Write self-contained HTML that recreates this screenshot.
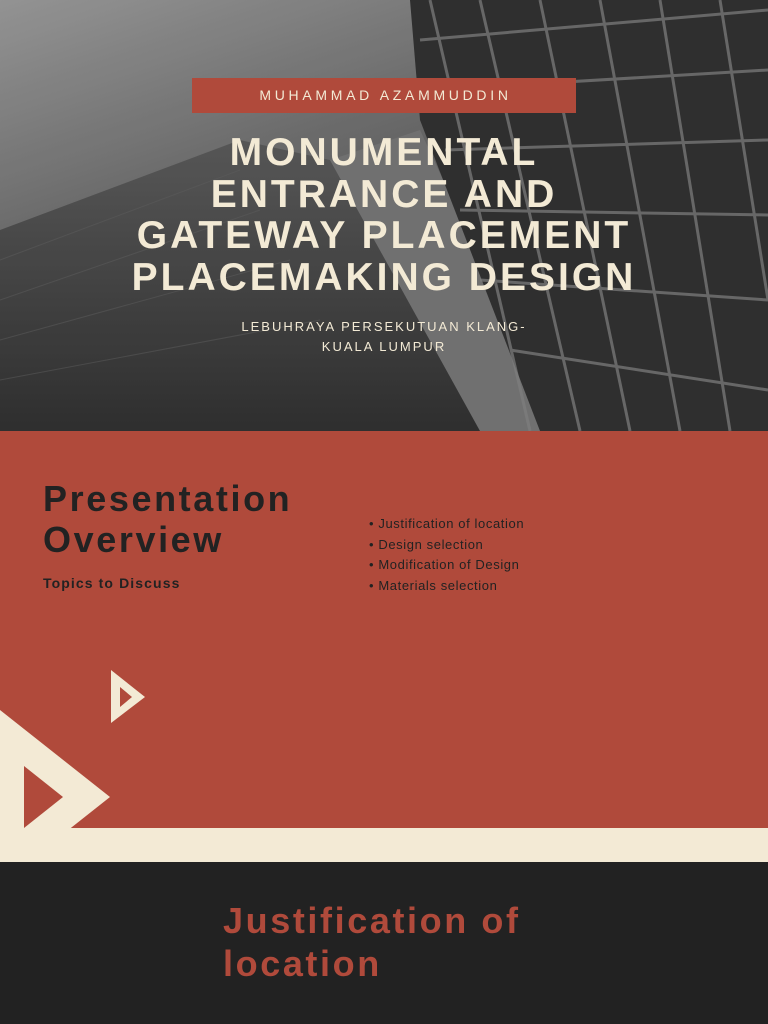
<!DOCTYPE html>
<html><head><meta charset="utf-8"><style>
*{margin:0;padding:0;box-sizing:border-box}
body{width:768px;height:1024px;overflow:hidden;font-family:"Liberation Sans",sans-serif;background:#222}
.a{position:absolute;white-space:nowrap}
</style></head><body>
<div style="position:absolute;left:0;top:0;width:768px;height:431px;overflow:hidden">
<svg width="768" height="431" style="position:absolute;left:0;top:0">
<defs>
<linearGradient id="sky" x1="0" y1="0" x2="0.6" y2="1">
<stop offset="0" stop-color="#a0a0a0"/><stop offset="0.4" stop-color="#757575"/><stop offset="1" stop-color="#3a3a3a"/>
</linearGradient>
<linearGradient id="bl" x1="0" y1="0" x2="0" y2="1">
<stop offset="0" stop-color="#5e5e5e"/><stop offset="1" stop-color="#333"/>
</linearGradient>
</defs>
<rect width="768" height="431" fill="url(#sky)"/>
<polygon points="0,230 240,140 330,160 480,431 0,431" fill="url(#bl)"/>
<polygon points="330,160 420,130 560,431 480,431" fill="#7a7a7a"/>
<polygon points="410,0 768,0 768,431 540,431 420,120" fill="#333"/>
<g stroke="#8a8a8a" stroke-width="3" opacity="0.7">
<line x1="430" y1="0" x2="530" y2="431"/><line x1="480" y1="0" x2="580" y2="431"/>
<line x1="540" y1="0" x2="630" y2="431"/><line x1="600" y1="0" x2="680" y2="431"/>
<line x1="660" y1="0" x2="730" y2="431"/><line x1="720" y1="0" x2="768" y2="300"/>
<line x1="420" y1="40" x2="768" y2="10"/><line x1="430" y1="90" x2="768" y2="70"/>
<line x1="445" y1="150" x2="768" y2="140"/><line x1="460" y1="210" x2="768" y2="215"/>
<line x1="480" y1="280" x2="768" y2="300"/><line x1="510" y1="350" x2="768" y2="390"/>
</g>
<g stroke="#666" stroke-width="1" opacity="0.5">
<line x1="0" y1="260" x2="240" y2="170"/><line x1="0" y1="300" x2="260" y2="210"/><line x1="0" y1="340" x2="290" y2="260"/><line x1="0" y1="380" x2="320" y2="320"/>
</g>
<rect width="768" height="431" fill="#000" opacity="0.08"/>
</svg>
</div>
<div class="a" style="left:192px;top:78px;width:384px;height:35px;background:#b04a3b;color:#f3ead5;font-size:14px;letter-spacing:3.7px;text-align:center;line-height:35px;padding-left:3px">MUHAMMAD AZAMMUDDIN</div>
<div class="a" style="left:0;top:132px;width:768px;text-align:center;color:#f3ead5;font-weight:bold;font-size:39px;line-height:41.5px;letter-spacing:3px">MONUMENTAL<br>ENTRANCE AND<br>GATEWAY PLACEMENT<br>PLACEMAKING DESIGN</div>
<div class="a" style="left:0;top:317px;width:768px;text-align:center;color:#f3ead5;font-size:13px;letter-spacing:2px;line-height:20px">LEBUHRAYA PERSEKUTUAN KLANG-<br>KUALA LUMPUR</div>
<div style="position:absolute;left:0;top:431px;width:768px;height:397px;background:#b04a3b"></div>
<div class="a" style="left:43px;top:478px;color:#222;font-weight:bold;font-size:36px;line-height:41px;letter-spacing:2.6px">Presentation<br>Overview</div>
<div class="a" style="left:43px;top:575px;color:#222;font-weight:bold;font-size:14px;letter-spacing:1.1px">Topics to Discuss</div>
<div class="a" style="left:369px;top:514px;color:#222;font-size:13px;line-height:20.5px;letter-spacing:0.6px">• Justification of location<br>• Design selection<br>• Modification of Design<br>• Materials selection</div>
<svg width="768" height="200" style="position:absolute;left:0;top:660px">
<polygon points="111,10 145,37 111,63" fill="#f3ead5"/>
<polygon points="120,27 132,37 120,47" fill="#b04a3b"/>
<polygon points="0,50 110,137 0,224" fill="#f3ead5"/>
<polygon points="24,106 63,137 24,168" fill="#b04a3b"/>
</svg>
<div style="position:absolute;left:0;top:828px;width:768px;height:34px;background:#f3ead5"></div>
<div style="position:absolute;left:0;top:862px;width:768px;height:162px;background:#222"></div>
<div class="a" style="left:223px;top:899px;color:#b04a3b;font-weight:bold;font-size:36px;line-height:43px;letter-spacing:2.6px">Justification of<br>location</div>
</body></html>
